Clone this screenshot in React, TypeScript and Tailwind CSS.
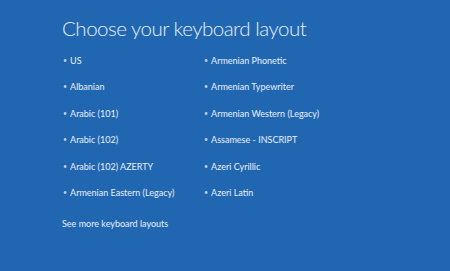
const leftColumn = [
  "US",
  "Albanian",
  "Arabic (101)",
  "Arabic (102)",
  "Arabic (102) AZERTY",
  "Armenian Eastern (Legacy)",
];

const rightColumn = [
  "Armenian Phonetic",
  "Armenian Typewriter",
  "Armenian Western (Legacy)",
  "Assamese - INSCRIPT",
  "Azeri Cyrillic",
  "Azeri Latin",
];

function LayoutItem({ label }: { label: string }) {
  return (
    <li className="flex h-[26.5px] items-center">
      <span className="mr-[3px] text-[7px] leading-none text-white/70">•</span>
      <span className="text-[9px] leading-none text-white/90">{label}</span>
    </li>
  );
}

export default function App() {
  return (
    <div
      className="h-[271px] w-[450px] overflow-hidden bg-[#2066b1]"
      style={{ fontFamily: 'Lato, "Open Sans", "Liberation Sans", sans-serif' }}
    >
      <div className="pl-[62px] pt-[14px]">
        <h1 className="text-[20.5px] font-light leading-[28px] tracking-[-0.5px] text-white/90">
          Choose your keyboard layout
        </h1>

        <div className="mt-[5px] flex">
          <ul className="w-[142px] pl-[1px]">
            {leftColumn.map((item) => (
              <LayoutItem key={item} label={item} />
            ))}
          </ul>
          <ul>
            {rightColumn.map((item) => (
              <LayoutItem key={item} label={item} />
            ))}
          </ul>
        </div>

        <p className="mt-[13px] text-[9px] leading-none text-white/90">
          See more keyboard layouts
        </p>
      </div>
    </div>
  );
}
